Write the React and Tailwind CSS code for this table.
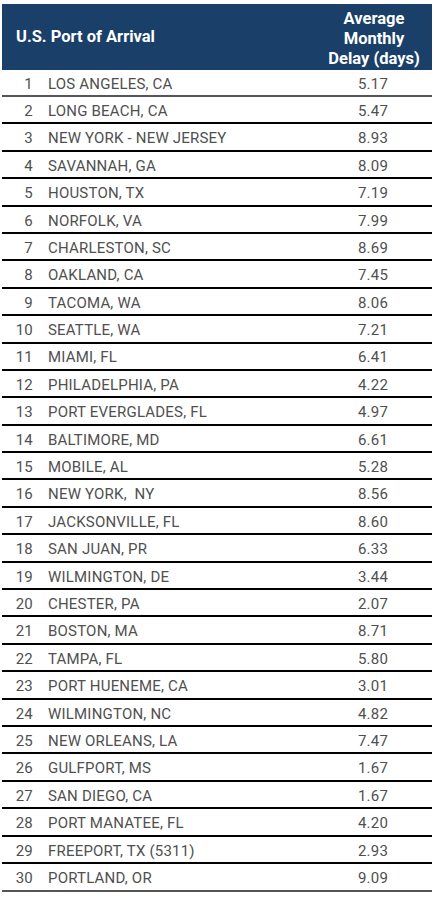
const rows = [
  ["LOS ANGELES, CA", "5.17"],
  ["LONG BEACH, CA", "5.47"],
  ["NEW YORK - NEW JERSEY", "8.93"],
  ["SAVANNAH, GA", "8.09"],
  ["HOUSTON, TX", "7.19"],
  ["NORFOLK, VA", "7.99"],
  ["CHARLESTON, SC", "8.69"],
  ["OAKLAND, CA", "7.45"],
  ["TACOMA, WA", "8.06"],
  ["SEATTLE, WA", "7.21"],
  ["MIAMI, FL", "6.41"],
  ["PHILADELPHIA, PA", "4.22"],
  ["PORT EVERGLADES, FL", "4.97"],
  ["BALTIMORE, MD", "6.61"],
  ["MOBILE, AL", "5.28"],
  ["NEW YORK,  NY", "8.56"],
  ["JACKSONVILLE, FL", "8.60"],
  ["SAN JUAN, PR", "6.33"],
  ["WILMINGTON, DE", "3.44"],
  ["CHESTER, PA", "2.07"],
  ["BOSTON, MA", "8.71"],
  ["TAMPA, FL", "5.80"],
  ["PORT HUENEME, CA", "3.01"],
  ["WILMINGTON, NC", "4.82"],
  ["NEW ORLEANS, LA", "7.47"],
  ["GULFPORT, MS", "1.67"],
  ["SAN DIEGO, CA", "1.67"],
  ["PORT MANATEE, FL", "4.20"],
  ["FREEPORT, TX (5311)", "2.93"],
  ["PORTLAND, OR", "9.09"],
];

export default function App() {
  return (
    <div className="w-[436px] h-[899px] bg-white pt-[4px] pl-[2px]" style={{ fontFamily: "Roboto, 'Liberation Sans', sans-serif" }}>
      <div className="w-[430px]">
        <div className="flex h-[66px] bg-[#1a4069] text-white font-bold text-[16.5px]">
          <div className="flex-1 flex items-center pl-[14px] pt-[1px]">U.S. Port of Arrival</div>
          <div className="w-[118px] flex items-center justify-center text-center leading-[20px] pt-[3px] pl-[2px]">
            Average<br />Monthly<br />Delay (days)
          </div>
        </div>
        {rows.map(([name, val], i) => {
          const first = i === 0;
          const last = i === rows.length - 1;
          return (
            <div
              key={i}
              className={
                "flex items-center pt-[3px] text-[15px] tracking-[0.2px] text-[#505050] border-b-2 " +
                (first ? "h-[27px] border-[#555555]" : last ? "h-[28px] border-[#555555]" : "h-[27.4px] border-black")
              }
            >
              <div className="w-[31px] text-right">{i + 1}</div>
              <div className="flex-1 pl-[15px] whitespace-pre">{name}</div>
              <div className="w-[118px] text-center">{val}</div>
            </div>
          );
        })}
      </div>
    </div>
  );
}
